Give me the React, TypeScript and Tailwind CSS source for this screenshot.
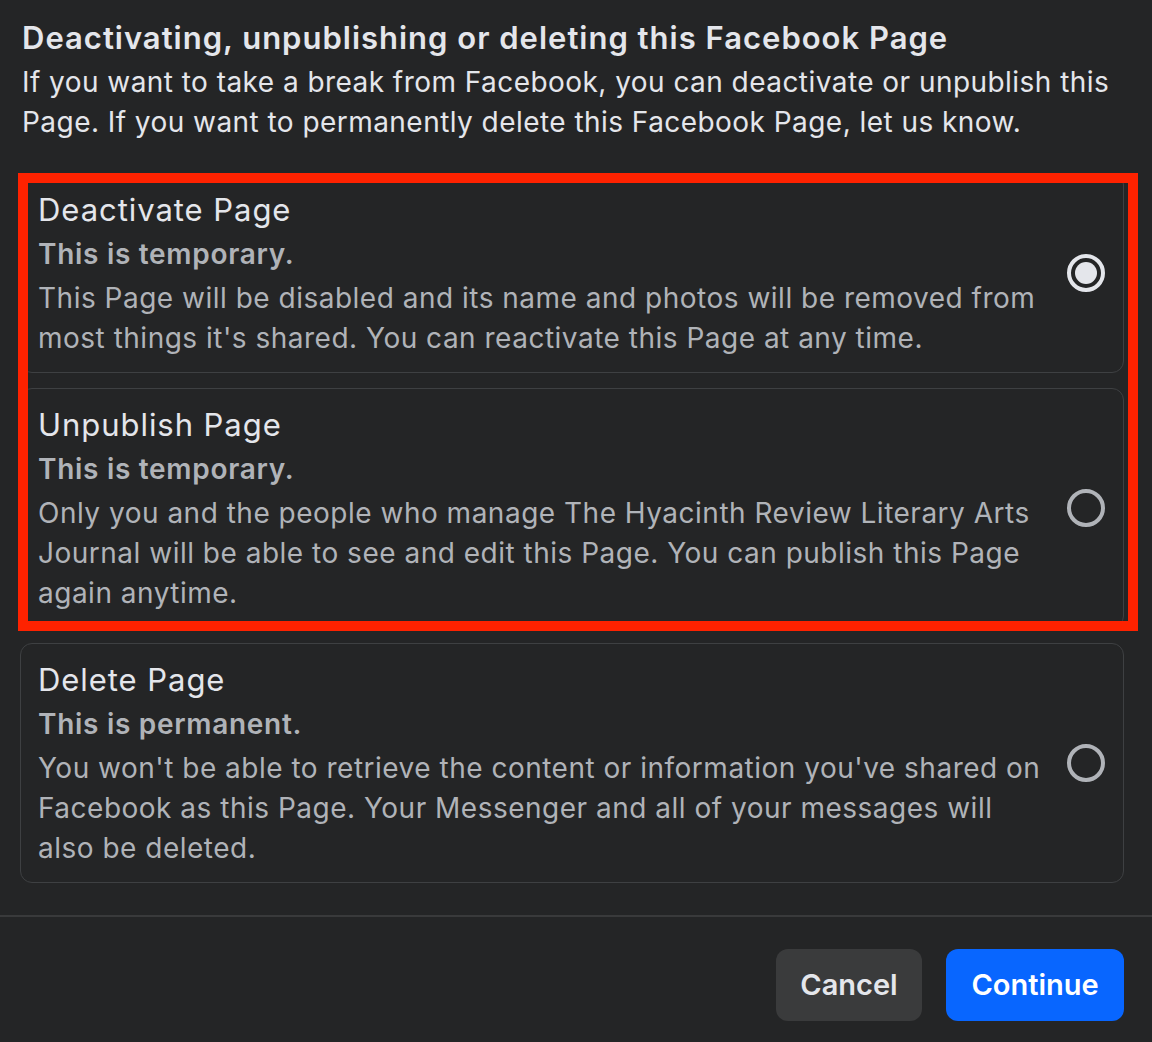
import React from "react";

function Radio({ checked }: { checked: boolean }) {
  if (checked) {
    return (
      <div className="w-[38px] h-[38px] rounded-full border-[4px] border-[#e4e6eb] flex items-center justify-center shrink-0">
        <div className="w-[22px] h-[22px] rounded-full bg-[#e4e6eb]" />
      </div>
    );
  }
  return <div className="w-[38px] h-[38px] rounded-full border-[4px] border-[#b0b3b8] shrink-0" />;
}

function Card({
  title,
  sub,
  lines,
  checked,
}: {
  title: string;
  sub: string;
  lines: string[];
  checked: boolean;
}) {
  return (
    <div className="border border-[#3e4042] rounded-[12px] pl-[17px] pr-[17px] pt-[14px] pb-[14px] flex items-center">
      <div className="flex-1 min-w-0">
        <div className="text-[31px] leading-[44px] text-[#e4e6eb] tracking-[0.95px]">{title}</div>
        <div className="text-[28px] leading-[44px] font-semibold text-[#b0b3b8] tracking-[0.7px]">{sub}</div>
        <div className="mt-[2px] text-[28px] leading-[40px] text-[#b0b3b8] tracking-[0.5px]">
          {lines.map((l, i) => (
            <div key={i} className="whitespace-nowrap">{l}</div>
          ))}
        </div>
      </div>
      <div className="pl-[20px] pr-[1px]">
        <Radio checked={checked} />
      </div>
    </div>
  );
}

export default function App() {
  return (
    <div
      className="w-[1152px] h-[1042px] bg-[#242526] overflow-hidden flex flex-col"
      style={{ fontFamily: "Inter, 'Noto Sans', sans-serif" }}
    >
      <div className="pl-[22px] pr-[28px] pt-[16px]">
        <div className="text-[31px] leading-[44px] font-semibold text-[#e4e6eb] tracking-[1px] whitespace-nowrap">
          Deactivating, unpublishing or deleting this Facebook Page
        </div>
        <div className="mt-[2px] text-[28px] leading-[40px] text-[#e4e6eb] tracking-[0.45px]">
          <div className="whitespace-nowrap">
            If you want to take a break from Facebook, you can deactivate or unpublish this
          </div>
          <div className="whitespace-nowrap">
            Page. If you want to permanently delete this Facebook Page, let us know.
          </div>
        </div>
      </div>

      <div className="relative mt-[31px] pl-[20px] pr-[28px] flex flex-col gap-[15px]">
        <Card
          title="Deactivate Page"
          sub="This is temporary."
          lines={[
            "This Page will be disabled and its name and photos will be removed from",
            "most things it's shared. You can reactivate this Page at any time.",
          ]}
          checked
        />
        <Card
          title="Unpublish Page"
          sub="This is temporary."
          lines={[
            "Only you and the people who manage The Hyacinth Review Literary Arts",
            "Journal will be able to see and edit this Page. You can publish this Page",
            "again anytime.",
          ]}
          checked={false}
        />
        <Card
          title="Delete Page"
          sub="This is permanent."
          lines={[
            "You won't be able to retrieve the content or information you've shared on",
            "Facebook as this Page. Your Messenger and all of your messages will",
            "also be deleted.",
          ]}
          checked={false}
        />
        <div className="absolute left-[18px] top-0 w-[1120px] h-[458px] border-[10px] border-[#fe2200] pointer-events-none" />
      </div>

      <div className="mt-[32px] h-[2px] bg-[#393a3b]" />

      <div className="flex justify-end gap-[24px] pr-[28px] pt-[32px]">
        <button className="w-[146px] h-[72px] rounded-[12px] bg-[#3a3b3c] text-[#e4e6eb] text-[29px] font-semibold">
          Cancel
        </button>
        <button className="w-[178px] h-[72px] rounded-[12px] bg-[#0866ff] text-white text-[29px] font-semibold">
          Continue
        </button>
      </div>
    </div>
  );
}
